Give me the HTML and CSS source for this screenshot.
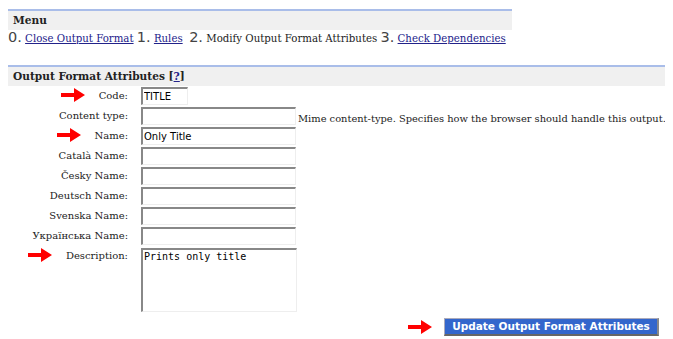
FILE: index.html
```html
<!DOCTYPE html>
<html lang="en">
<head>
  <meta charset="UTF-8">
  <title>Output Format Attributes</title>
  <link rel="stylesheet" href="styles.css">
</head>
<body>
  <div class="menu-box">
    <div class="box-header">Menu</div>
    <div class="steps">
      <span class="num">0.</span> <a href="#">Close Output Format</a>
      <span class="num">1.</span> <a href="#">Rules</a>
      &nbsp;<span class="num">2.</span> Modify Output Format Attributes
      <span class="num">3.</span> <a href="#">Check Dependencies</a>
    </div>
  </div>

  <div class="attr-box">
    <div class="box-header">Output Format Attributes [<a href="#">?</a>]</div>
    <table class="attr-form">
      <colgroup>
        <col class="col-label">
        <col class="col-field">
        <col>
      </colgroup>
      <tr>
        <td class="label"><svg class="arrow" viewBox="0 0 24 14"><path d="M0 5h13V0l11 7-11 7V9H0z" fill="#f00"/></svg>Code:</td>
        <td><input class="code" type="text" value="TITLE"></td>
        <td></td>
      </tr>
      <tr>
        <td class="label">Content type:</td>
        <td><input class="wide" type="text"></td>
        <td class="help">Mime content-type. Specifies how the browser should handle this output.</td>
      </tr>
      <tr>
        <td class="label"><svg class="arrow" viewBox="0 0 24 14"><path d="M0 5h13V0l11 7-11 7V9H0z" fill="#f00"/></svg>Name:</td>
        <td><input class="wide" type="text" value="Only Title"></td>
        <td></td>
      </tr>
      <tr><td class="label">Català Name:</td><td><input class="wide" type="text"></td><td></td></tr>
      <tr><td class="label">Česky Name:</td><td><input class="wide" type="text"></td><td></td></tr>
      <tr><td class="label">Deutsch Name:</td><td><input class="wide" type="text"></td><td></td></tr>
      <tr><td class="label">Svenska Name:</td><td><input class="wide" type="text"></td><td></td></tr>
      <tr><td class="label">Українська Name:</td><td><input class="wide" type="text"></td><td></td></tr>
      <tr>
        <td class="label"><svg class="arrow" viewBox="0 0 24 14"><path d="M0 5h13V0l11 7-11 7V9H0z" fill="#f00"/></svg>Description:</td>
        <td><textarea>Prints only title</textarea></td>
        <td></td>
      </tr>
    </table>
    <div class="actions">
      <svg class="arrow" viewBox="0 0 24 14"><path d="M0 5h13V0l11 7-11 7V9H0z" fill="#f00"/></svg>
      <button type="button">Update Output Format Attributes</button>
    </div>
  </div>
</body>
</html>
```

FILE: styles.css
```css
body {
  margin: 8px;
  font-family: "DejaVu Serif", serif;
  font-size: 10px;
  color: #222;
  background: #fff;
}

a {
  color: #22228a;
}

.menu-box {
  width: 504px;
  border-top: 2px solid #a9bde9;
  margin-top: 1px;
}

.box-header {
  background: #f0f0f0;
  font-weight: bold;
  font-size: 10.6px;
  padding: 3px 5px 4px;
  line-height: 12px;
}

.steps {
  padding: 1px 0 0 0;
  height: 15px;
  line-height: 15px;
  font-size: 10.2px;
  white-space: nowrap;
}

.num {
  font-family: "DejaVu Sans", sans-serif;
  font-size: 14.5px;
  line-height: 10px;
  color: #444;
}

.attr-box {
  margin-top: 19px;
  border-top: 2px solid #a9bde9;
}

.attr-form {
  border-collapse: collapse;
  table-layout: fixed;
  width: 100%;
  margin-top: 1px;
}

.col-label {
  width: 133px;
}

.col-field {
  width: 157px;
}

.attr-form td {
  padding: 0 0 2px 0;
  vertical-align: top;
}

.attr-form td.label {
  text-align: right;
  padding: 3px 13px 0 0;
  white-space: nowrap;
}

.arrow {
  width: 24px;
  height: 14px;
  vertical-align: middle;
  margin: -4px 14px 0 0;
}

input, textarea {
  box-sizing: border-box;
  margin: 0;
  border-style: solid;
  border-width: 2px 1px 1px 2px;
  border-color: #888 #eee #eee #888;
  padding: 1px 1px;
  background: #fff;
  color: #000;
}

input {
  height: 18px;
  font-family: "DejaVu Sans", sans-serif;
  font-size: 10px;
}

input.code {
  width: 47px;
}

input.wide {
  width: 155px;
}

textarea {
  width: 156px;
  height: 64px;
  font-family: "DejaVu Sans Mono", monospace;
  font-size: 10px;
  resize: none;
  display: block;
  margin-top: 1px;
}

.attr-form td.help {
  padding: 6px 0 0 0;
  font-size: 9.9px;
  white-space: nowrap;
  overflow: visible;
}

.actions {
  display: flex;
  justify-content: flex-end;
  align-items: center;
  padding-right: 6px;
  margin-top: 4px;
}

.actions .arrow {
  margin: 0 12px 0 0;
}

button {
  background: #3366cc;
  color: #fff;
  font-family: "DejaVu Sans", sans-serif;
  font-weight: bold;
  font-size: 10.5px;
  border-style: solid;
  border-width: 1px 2px 2px 1px;
  border-color: #aab #888 #666 #aab;
  padding: 1px 7px 2px;
  height: 18px;
  width: 215px;
}
```
